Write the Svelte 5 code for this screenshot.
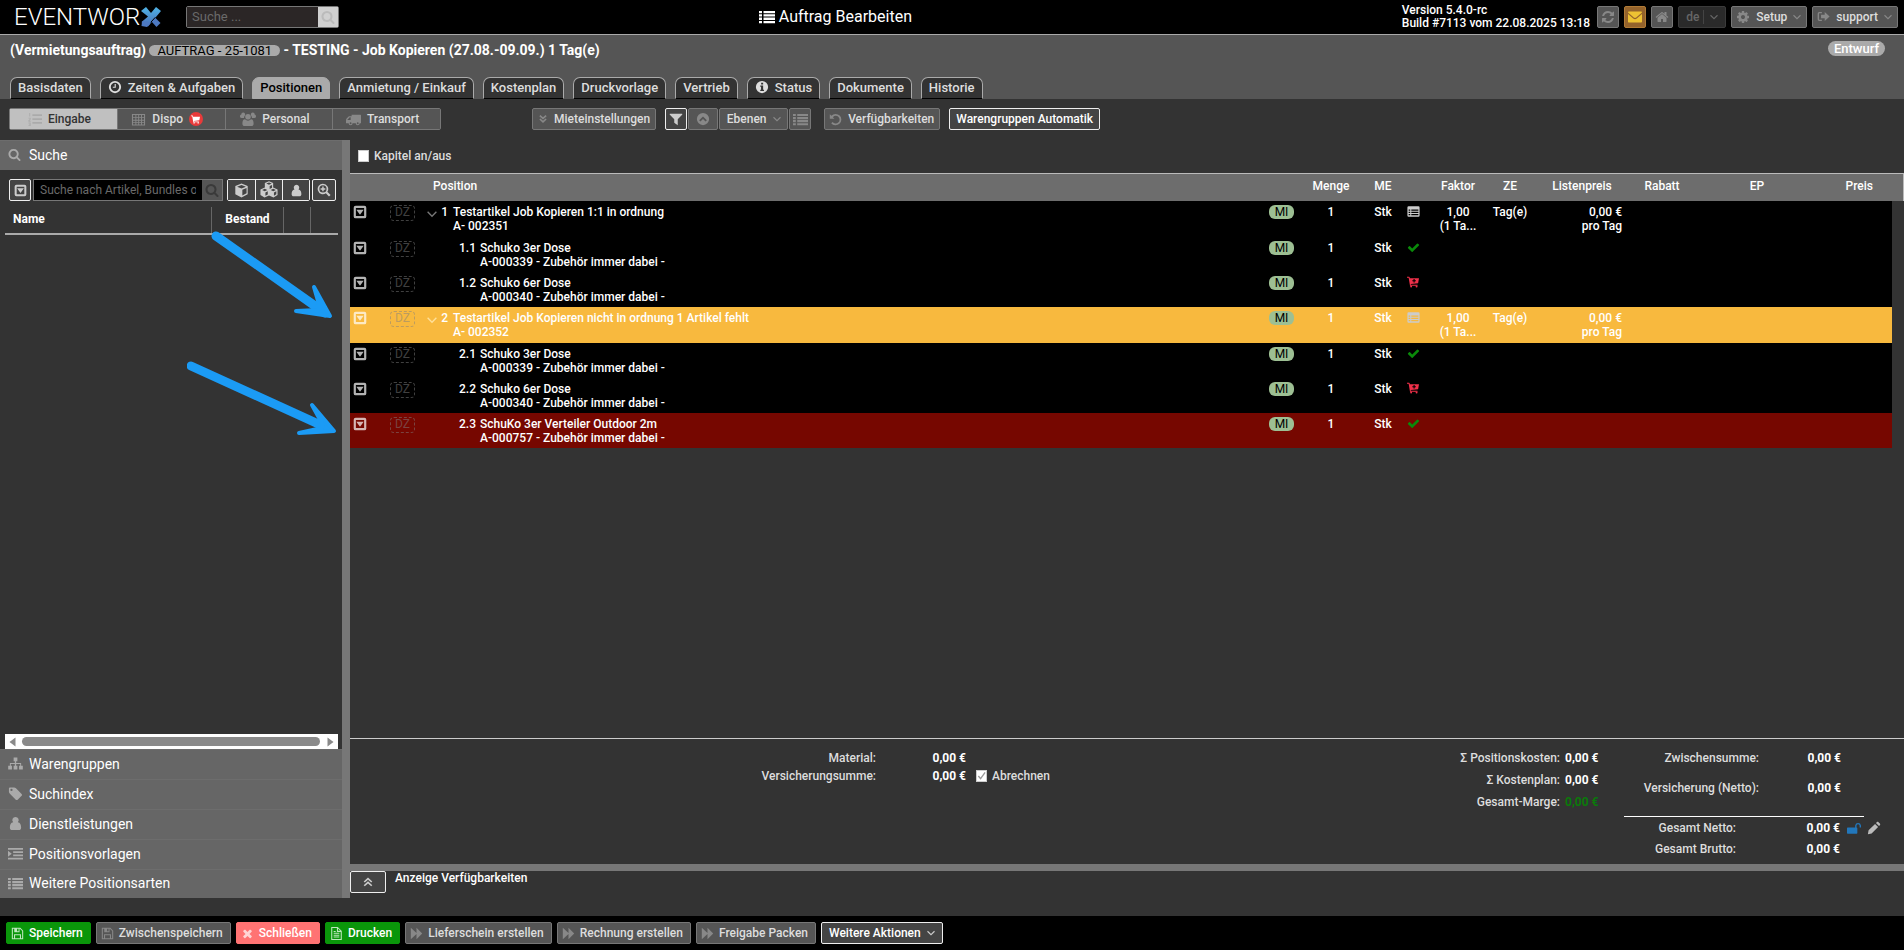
<script lang="ts">
  type Glyph = { vb?: string; d: string; stroke?: number };

  const glyphs: Record<string, Glyph> = {
    home: { vb: '0 0 1792 1792', d: 'M1472 992v480q0 26-19 45t-45 19h-384v-384h-256v384h-384q-26 0-45-19t-19-45v-480q0-1 .5-3t.5-3l575-474 575 474q1 2 1 6zm223-69l-62 74q-8 9-21 11h-3q-13 0-21-7l-692-577-692 577q-12 8-24 7-13-2-21-11l-62-74q-8-10-7-23.500t11-21.500l719-599q32-26 76-26t76 26l244 204v-195q0-14 9-23t23-9h192q14 0 23 9t9 23v408l219 182q10 8 11 21.500t-7 23.500z' },
    check: { vb: '0 0 1792 1792', d: 'M1671 566q0 40-28 68l-724 724-136 136q-28 28-68 28t-68-28l-136-136-362-362q-28-28-28-68t28-68l136-136q28-28 68-28t68 28l294 295 656-657q28-28 68-28t68 28l136 136q28 28 28 68z' },
    times: { vb: '0 0 1792 1792', d: 'M1490 1322q0 40-28 68l-136 136q-28 28-68 28t-68-28l-294-294-294 294q-28 28-68 28t-68-28l-136-136q-28-28-28-68t28-68l294-294-294-294q-28-28-28-68t28-68l136-136q28-28 68-28t68 28l294 294 294-294q28-28 68-28t68 28l136 136q28 28 28 68t-28 68l-294 294 294 294q28 28 28 68z' },
    search: { vb: '0 0 1792 1792', d: 'M1216 832q0-185-131.500-316.500t-316.500-131.500-316.500 131.500-131.500 316.500 131.500 316.500 316.500 131.500 316.500-131.500 131.500-316.500zm512 832q0 52-38 90t-90 38q-54 0-90-38l-343-342q-179 124-399 124-143 0-273.500-55.500t-225-150-150-225-55.500-273.500 55.500-273.500 150-225 225-150 273.500-55.500 273.500 55.500 225 150 150 225 55.500 273.500q0 220-124 399l343 343q37 37 37 90z' },
    cog: { vb: '0 0 1792 1792', d: 'M1152 896q0-106-75-181t-181-75-181 75-75 181 75 181 181 75 181-75 75-181zm512-109v222q0 12-8 23t-20 13l-185 28q-19 54-39 91 35 50 107 138 10 12 10 25t-9 23q-27 37-99 108t-94 71q-12 0-26-9l-138-108q-44 23-91 38-16 136-29 186-7 28-36 28h-222q-14 0-24.500-8.500t-11.500-21.500l-28-184q-49-16-90-37l-141 107q-10 9-25 9-14 0-25-11-126-114-165-168-7-10-7-23 0-12 8-23 15-21 51-66.500t54-70.500q-27-50-41-99l-183-27q-13-2-21-12.500t-8-23.500v-222q0-12 8-23t19-13l186-28q14-46 39-92-40-57-107-138-10-12-10-24 0-10 9-23 26-36 98.500-107.500t94.500-71.500q13 0 26 10l138 107q44-23 91-38 16-136 29-186 7-28 36-28h222q14 0 24.500 8.500t11.500 21.500l28 184q49 16 90 37l142-107q9-9 24-9 13 0 25 10 129 119 165 170 7 8 7 22 0 12-8 23-15 21-51 66.500t-54 70.500q26 50 41 98l183 28q13 2 21 12.500t8 23.500z' },
    refresh: { vb: '0 0 1792 1792', d: 'M1639 1056q0 5-1 7-64 268-268 434.500t-478 166.500q-146 0-282.500-55t-243.500-157l-129 129q-19 19-45 19t-45-19-19-45v-448q0-26 19-45t45-19h448q26 0 45 19t19 45-19 45l-137 137q71 66 161 102t187 36q134 0 250-65t186-179q11-17 53-117 8-23 30-23h192q13 0 22.500 9.500t9.500 22.500zm25-800v448q0 26-19 45t-45 19h-448q-26 0-45-19t-19-45 19-45l138-138q-148-137-349-137-134 0-250 65t-186 179q-11 17-53 117-8 23-30 23h-199q-13 0-22.500-9.500t-9.500-22.500v-7q65-268 270-434.500t480-166.500q146 0 284 55.500t245 156.500l130-129q19-19 45-19t45 19 19 45z' },
    mail: { d: 'M1 3.500C1 3 1.400 2.500 2 2.500H14c.6 0 1 .5 1 1L9.200 8.600Q8 9.500 6.800 8.600L1 3.500zM1 5l5.200 4.600Q8 10.900 9.800 9.600L15 5v7.500c0 .6-.4 1-1 1H2c-.6 0-1-.4-1-1z' },
    list: { d: 'M0 2h3v2.300H0zM4.500 2H16v2.300H4.500zM0 5.300h3v2.300H0zM4.500 5.300H16v2.300H4.500zM0 8.600h3v2.300H0zM4.500 8.600H16v2.300H4.500zM0 11.900h3v2.300H0zM4.500 11.900H16v2.300H4.500z' },
    numbers: { d: 'M5 2.500h11v2H5zM5 7h11v2H5zM5 11.500h11v2H5zM1.500 1h1v4h-1zM.5 6.500h2.500v2l-1.500 1.500H3v1H.5V9.500L2 8.200V7.500H.5zM.5 12H3v4H.5v-1H2v-.6H1v-.8h1V13H.5z' },
    grid: { d: 'M1 2h14v12.500H1zM2.200 3.200v2h2.500v-2zM5.700 3.200v2h2v-2zM8.700 3.200v2h2v-2zM11.700 3.200v2h2.200v-2zM2.200 6.200v2h2.500v-2zM5.700 6.200v2h2v-2zM8.700 6.200v2h2v-2zM11.700 6.200v2h2.200v-2zM2.200 9.200v1.600h2.500V9.200zM5.700 9.200v1.600h2V9.200zM8.700 9.200v1.600h2V9.200zM11.700 9.200v1.600h2.200V9.200zM2.200 11.800v1.500h2.500v-1.500zM5.700 11.800v1.500h2v-1.500zM8.700 11.800v1.500h2v-1.500zM11.700 11.800v1.500h2.200v-1.500z' },
    users: { d: 'M3.200 1.500a2 2 0 0 1 1.700 3A3.800 3.800 0 0 0 4 7H1.500C.5 7 0 6.500 0 5.800 0 4.500.5 3.600 1.300 3.600A2 2 0 0 1 3.200 1.500zM12.800 1.500a2 2 0 0 0-1.700 3A3.800 3.800 0 0 1 12 7h2.500c1 0 1.500-.5 1.500-1.200 0-1.300-.5-2.200-1.300-2.200A2 2 0 0 0 12.800 1.500zM8 3a2.800 2.800 0 1 1 0 5.600A2.800 2.800 0 0 1 8 3zM5 8.300Q8 11 11 8.300c2 0 2.600 2 2.600 4.400 0 1.500-.9 2.300-2.300 2.300H4.700c-1.400 0-2.300-.8-2.300-2.300C2.400 10.300 3 8.300 5 8.300z' },
    truck: { d: 'M6 3h9.500c.3 0 .5.2.5.5V12h-1.400a2.100 2.100 0 0 1-4.200 0H7a2.100 2.100 0 0 1-4.200 0H0V9c0-1 .2-1.800.9-2.400L2.800 4.900c.4-.4.7-.5 1.200-.5h2zM1.500 8.500H5V5.700H4L1.500 8.200zM4.900 11a1 1 0 1 0 0 2 1 1 0 0 0 0-2zM12.500 11a1 1 0 1 0 0 2 1 1 0 0 0 0-2z' },
    cart: { d: 'M0 1h2.800c.4 0 .6.3.7.8L3.700 3H16l-1.200 6.500L5 10.600l.1.900H14v1.500H4L2.200 2.300H0zM4.200 14a1.300 1.300 0 1 1 2.600 0 1.300 1.300 0 0 1-2.600 0zM11.500 14a1.300 1.300 0 1 1 2.600 0 1.300 1.300 0 0 1-2.600 0z' },
    cartplus: { d: 'M0 1h2.800c.4 0 .6.3.7.8L3.700 3H16l-1.200 6.500L5 10.600l.1.900H14v1.500H4L2.200 2.300H0zM8.700 4v1.600H7.100v1.400h1.600v1.600h1.500V7h1.600V5.600h-1.600V4zM4.200 14a1.300 1.300 0 1 1 2.600 0 1.300 1.300 0 0 1-2.600 0zM11.500 14a1.300 1.300 0 1 1 2.600 0 1.300 1.300 0 0 1-2.600 0z' },
    clock: { d: 'M8 1a7 7 0 1 1 0 14A7 7 0 0 1 8 1zm0 2.200a4.800 4.800 0 1 0 0 9.600 4.800 4.800 0 0 0 0-9.600zM7.600 4.500h1.300v4.300H5.500V7.600h2.100z' },
    info: { d: 'M8 1a7 7 0 1 1 0 14A7 7 0 0 1 8 1zM7 3.200v2h2.300v-2zM6 6.300v1.300h.9v3.600H6v1.300h4.300v-1.300h-1V6.300z' },
    chevdown: { d: 'M1 4.500l7 7 7-7', stroke: 2.2 },
    dbldown: { d: 'M3 2.500L8 7l5-4.500M3 8L8 12.500 13 8', stroke: 2.600 },
    dblup: { d: 'M3 8l5-4.500L13 8M3 13l5-4.500 5 4.500', stroke: 2.2 },
    filter: { d: 'M1 2h14c.4.500.3.800 0 1.100L10 8.300V15L6 12.300v-4L1 3.100C.7 2.800.6 2.500 1 2z' },
    circleup: { d: 'M8 1a7 7 0 1 1 0 14A7 7 0 0 1 8 1zM8 5L3.600 9.300l1.500 1.500L8 8l2.900 2.800 1.500-1.500z' },
    undo: { d: 'M1 1.500L3 3.400A7 7 0 1 1 2.700 12.500l1.800-1.500A4.700 4.700 0 1 0 4.800 5.100L6.700 7H1z' },
    caretbox: { d: 'M3 .8h10A2.200 2.200 0 0 1 15.200 3v10a2.200 2.200 0 0 1-2.200 2.200H3A2.200 2.200 0 0 1 .8 13V3A2.200 2.200 0 0 1 3 .8zM3.300 3.300v9.400h9.400V3.300zM3.800 5.300h8.400L8 11.200z' },
    cube: { d: 'M8 .6l6.600 2.700v8.600L8 15.400 1.400 11.900V3.300zM8 2L3.300 4 8 5.900 12.700 4zM8.900 7.200v6.100l4.500-2.400V5.300z' },
    cubes: { d: 'M8 .3l3.700 1.500v4L15.600 7.500v5L12 14.700 8 12.900l-4 1.800L.4 12.500v-5l3.900-1.700v-4zM8 1.300L5.600 2.300 8 3.400l2.400-1.100zM8.600 4.500v2.700l2.100-1.100V3.500zM4.200 6.900L1.900 7.900l2.300 1.100 2.300-1.100zM4.800 10.200v2.800l2.100-1V9.200zM11.800 6.900L9.500 7.900l2.300 1.100 2.300-1.100zM12.400 10.200v2.800l2.100-1.200V9.200z' },
    person: { d: 'M8 1a3.400 3.400 0 0 1 2.500 5.700C13 7 14 9.500 14 12.500c0 1.600-1 2.500-2.500 2.500h-7C3 15 2 14.100 2 12.500 2 9.500 3 7 5.500 6.700A3.400 3.400 0 0 1 8 1z' },
    zoomin: { d: 'M6.800.8a6 6 0 0 1 5 9.300l3.700 3.600-1.800 1.800-3.600-3.700A6 6 0 1 1 6.800.8zm0 1.900a4.100 4.100 0 1 0 0 8.200 4.100 4.100 0 0 0 0-8.200zM6 4.100h1.600V6h1.900v1.600H7.600v1.900H6V7.600H4.100V6H6z' },
    sitemap: { d: 'M6 1.500h4v4H8.700V7.500H14v3h1.800v4h-4v-4H13V8.600H8.700v1.900H10v4H6v-4h1.300V8.600H3v1.900h1.200v4h-4v-4H2v-3h5.300v-2H6z' },
    tag: { d: 'M2 1.500h4.500c.7 0 1.500.4 2 .9l6 6c.6.600.6 1.400 0 2l-4.200 4.200c-.6.600-1.400.6-2 0l-6-6A3 3 0 0 1 1 6.500V2.500c0-.6.4-1 1-1zM3.700 3a1.200 1.200 0 1 0 0 2.400A1.200 1.200 0 0 0 3.700 3z' },
    indent: { d: 'M0 2h16v2H0zM5.500 5.500H16v2H5.500zM5.500 9H16v2H5.500zM0 12.500h16v2H0zM0 5l4 3.200L0 11.500z' },
    tablelist: { d: 'M2 1.500h12a1.500 1.500 0 0 1 1.500 1.500v10a1.500 1.500 0 0 1-1.500 1.500H2A1.500 1.500 0 0 1 .5 13V3A1.500 1.500 0 0 1 2 1.500zM2 5.500v1.600h2V5.500zM5.300 5.500v1.600H14V5.500zM2 8.300v1.500h2V8.300zM5.300 8.300v1.500H14V8.300zM2 11v1.600h2V11zM5.300 11v1.600H14V11z' },
    save: { d: 'M1 1h10.500L15 4.500V15H1zM2.300 2.300v11.400h1.400V9h8.600v4.700h1.400V5L11 2.300h-.5V6.600H4V2.300zM7.500 2.300v3h1.800v-3zM5 10.200v3.500h6v-3.500z' },
    doc: { d: 'M1.500 0h8L14.500 5v11h-13zM2.800 1.300v13.400h10.400V6H8.500V1.300zM9.800 1.800v2.900h2.900zM4.500 7.200h7v1.200h-7zM4.500 9.500h7v1.200h-7zM4.500 11.800h7V13h-7zM4.500 4.900H7v1.200H4.500z' },
    ffwd: { d: 'M1 1l7 6.500V1l7 7-7 7V8.500L1 15z' },
    signout: { d: 'M2.800 2.500H6V4H3c-.3 0-.6.300-.6.600v6.800c0 .3.3.6.6.6h3v1.500H2.800A2 2 0 0 1 .8 11.500v-7a2 2 0 0 1 2-2zM9.500 2.500L15.500 8l-6 5.500v-3.200h-4.500V5.700h4.500z' },
    unlock: { d: 'M9.300 7.500V5.200a3.400 3.400 0 0 1 6.700 0V7.500h-1.600V5.200a1.800 1.800 0 0 0-3.500 0v2.300c.6 0 .9.300.9.800v5.400c0 .5-.3.800-.8.800H.8c-.5 0-.8-.3-.8-.8V8.300c0-.5.3-.8.8-.8z' },
    pencil: { d: 'M1 15l.8-4.300 7.400-7.400 3.500 3.500-7.400 7.400zM10.200 2.300l1-1c.6-.6 1.400-.6 2 0l1.500 1.500c.6.600.6 1.400 0 2l-1 1z' }
  };

  const tabs = [
    { label: 'Basisdaten' },
    { label: 'Zeiten & Aufgaben', icon: 'clock' },
    { label: 'Positionen', active: true },
    { label: 'Anmietung / Einkauf' },
    { label: 'Kostenplan' },
    { label: 'Druckvorlage' },
    { label: 'Vertrieb' },
    { label: 'Status', icon: 'info' },
    { label: 'Dokumente' },
    { label: 'Historie' }
  ];

  const rows = [
    { nr: '1', name: 'Testartikel Job Kopieren 1:1 in ordnung', sub: 'A- 002351', icon: 'tablelist', parent: true, tone: '' },
    { nr: '1.1', name: 'Schuko 3er Dose', sub: 'A-000339 - Zubehör immer dabei -', icon: 'check', parent: false, tone: '' },
    { nr: '1.2', name: 'Schuko 6er Dose', sub: 'A-000340 - Zubehör immer dabei -', icon: 'cartplus', parent: false, tone: '' },
    { nr: '2', name: 'Testartikel Job Kopieren nicht in ordnung 1 Artikel fehlt', sub: 'A- 002352', icon: 'tablelist', parent: true, tone: 'warn' },
    { nr: '2.1', name: 'Schuko 3er Dose', sub: 'A-000339 - Zubehör immer dabei -', icon: 'check', parent: false, tone: '' },
    { nr: '2.2', name: 'Schuko 6er Dose', sub: 'A-000340 - Zubehör immer dabei -', icon: 'cartplus', parent: false, tone: '' },
    { nr: '2.3', name: 'SchuKo 3er Verteiler Outdoor 2m', sub: 'A-000757 - Zubehör immer dabei -', icon: 'check', parent: false, tone: 'error' }
  ];

  const sections = [
    { label: 'Warengruppen', icon: 'sitemap' },
    { label: 'Suchindex', icon: 'tag' },
    { label: 'Dienstleistungen', icon: 'person' },
    { label: 'Positionsvorlagen', icon: 'indent' },
    { label: 'Weitere Positionsarten', icon: 'list' }
  ];
</script>

{#snippet icon(name: string, size: number)}
  {@const g = glyphs[name]}
  <svg class="ico {name}" width={size} height={size} viewBox={g.vb ?? '0 0 16 16'} aria-hidden="true">
    {#if g.stroke}
      <path d={g.d} fill="none" stroke="currentColor" stroke-width={g.stroke} />
    {:else}
      <path d={g.d} fill="currentColor" fill-rule="evenodd" />
    {/if}
  </svg>
{/snippet}

<div class="app">
  <header class="top">
    <a class="logo" href="#start" aria-label="EVENTWORX">
      <span>EVENTWOR</span>
      <svg width="20" height="20" viewBox="0 0 20 20" aria-hidden="true">
        <defs>
          <linearGradient id="lx" x1="0" y1="0" x2="0" y2="1">
            <stop offset="0" stop-color="#4fb4e6" />
            <stop offset="1" stop-color="#4a6db8" />
          </linearGradient>
        </defs>
        <path d="M5 0l5 6 5-6 5 4-13 15.500L.5 15 7 9.500 0 4z" fill="url(#lx)" />
        <path d="M1 14.500h5.500L9 17l-3 3-5.500-1z" fill="#4d79c2" />
        <path d="M10.500 14.500l3.500-4 5.500 5.500-4 4z" fill="#4d79c2" />
        <path d="M14.300 10.300l-4.500 5" stroke="#000" stroke-width="1" />
      </svg>
    </a>
    <form class="topsearch" onsubmit={(e) => e.preventDefault()}>
      <input type="search" placeholder="Suche ..." aria-label="Suche" />
      <button type="submit" aria-label="Suchen">{@render icon('search', 14)}</button>
    </form>
    <h1>{@render icon('list', 16)}Auftrag Bearbeiten</h1>
    <div class="version">Version 5.4.0-rc<br />Build #7113 vom 22.08.2025 13:18</div>
    <div class="topbtns">
      <button class="btn sq" aria-label="Aktualisieren">{@render icon('refresh', 14)}</button>
      <button class="btn sq mailbtn" aria-label="Nachrichten">{@render icon('mail', 16)}</button>
      <button class="btn sq" aria-label="Startseite">{@render icon('home', 14)}</button>
      <span class="lang">
        <select aria-label="Sprache"><option>de</option></select>
        {@render icon('chevdown', 8)}
      </span>
      <button class="btn setup">{@render icon('cog', 14)}<span>Setup</span>{@render icon('chevdown', 8)}</button>
      <button class="btn setup">{@render icon('signout', 13)}<span>support</span>{@render icon('chevdown', 8)}</button>
    </div>
  </header>

  <section class="sub">
    <div class="jobline">
      <h2>(Vermietungsauftrag) <span class="jobnr">AUFTRAG - 25-1081</span> - TESTING - Job Kopieren (27.08.-09.09.) 1 Tag(e)</h2>
      <span class="state">Entwurf</span>
    </div>
    <nav class="tabs">
      {#each tabs as tab}
        <a href="#tab" class:active={tab.active}>
          {#if tab.icon}{@render icon(tab.icon, 14)}{/if}{tab.label}
        </a>
      {/each}
    </nav>
  </section>

  <div class="toolbar">
    <div class="seg">
      <button class="on">{@render icon('numbers', 14)}Eingabe</button>
      <button>{@render icon('grid', 15)}Dispo<i class="cartdot">{@render icon('cart', 9)}</i></button>
      <button>{@render icon('users', 16)}Personal</button>
      <button>{@render icon('truck', 15)}Transport</button>
    </div>
    <button class="btn rent">{@render icon('dbldown', 10)}Mieteinstellungen</button>
    <div class="tools">
      <button class="btn sq lit" aria-label="Filter">{@render icon('filter', 14)}</button>
      <button class="btn upbtn" aria-label="Nach oben">{@render icon('circleup', 14)}</button>
      <button class="btn levels">Ebenen{@render icon('chevdown', 8)}</button>
      <button class="btn sq" aria-label="Liste">{@render icon('list', 15)}</button>
    </div>
    <button class="btn avail">{@render icon('undo', 13)}Verfügbarkeiten</button>
    <button class="btn lit auto">Warengruppen Automatik</button>
  </div>

  <main>
    <aside>
      <button class="acc first">{@render icon('search', 13)}Suche</button>
      <div class="find">
        <button class="btn sq lit" aria-label="Auswahl">{@render icon('caretbox', 13)}</button>
        <form class="artsearch" onsubmit={(e) => e.preventDefault()}>
          <input placeholder="Suche nach Artikel, Bundles oder Personal" aria-label="Artikelsuche" />
          <button type="submit" aria-label="Suchen">{@render icon('search', 14)}</button>
        </form>
        <div class="group">
          <button aria-label="Artikel">{@render icon('cube', 15)}</button>
          <button aria-label="Bundles">{@render icon('cubes', 18)}</button>
          <button aria-label="Personal">{@render icon('person', 13)}</button>
        </div>
        <button class="btn sq lit zoom" aria-label="Erweiterte Suche">{@render icon('zoomin', 14)}</button>
      </div>
      <table class="stock">
        <colgroup><col /><col class="s1" /><col class="s2" /><col class="s3" /></colgroup>
        <thead><tr><th>Name</th><th>Bestand</th><th></th><th></th></tr></thead>
      </table>
      <div class="void"></div>
      <div class="hscroll">
        <svg width="7" height="10" viewBox="0 0 7 10" aria-hidden="true"><path d="M6.500.5v9L.5 5z" fill="#8a8a8a" /></svg>
        <span></span>
        <svg width="7" height="10" viewBox="0 0 7 10" aria-hidden="true"><path d="M.5.5v9l6-4.500z" fill="#8a8a8a" /></svg>
      </div>
      <div class="accs">
        {#each sections as s}
          <button class="acc">{@render icon(s.icon, 15)}{s.label}</button>
        {/each}
      </div>
    </aside>
    <div class="split"></div>

    <section class="right">
      <label class="chapter"><input type="checkbox" />Kapitel an/aus</label>
      <table class="pos">
        <colgroup>
          <col class="w40" /><col class="w35" /><col /><col class="w38" /><col class="w58" /><col class="w46" /><col class="w24" />
          <col class="w56" /><col class="w48" /><col class="w96" /><col class="w64" /><col class="w126" /><col class="w72" /><col class="w12" />
        </colgroup>
        <thead>
          <tr>
            <th></th><th></th><th class="l">Position</th><th></th><th>Menge</th><th>ME</th><th></th>
            <th>Faktor</th><th>ZE</th><th>Listenpreis</th><th>Rabatt</th><th>EP</th><th class="pr">Preis</th><th></th>
          </tr>
        </thead>
        <tbody>
          {#each rows as r}
            <tr class={r.tone} class:parent={r.parent}>
              <td class="menu"><button aria-label="Positionsmenü">{@render icon('caretbox', 14)}</button></td>
              <td><span class="dz">DZ</span></td>
              <td class="l">
                <div class="name">
                  <span class="chev">{#if r.parent}{@render icon('chevdown', 10)}{/if}</span>
                  <span class="nr">{r.nr}</span>
                  <span>{r.name}<br />{r.sub}</span>
                </div>
              </td>
              <td class="micell"><span class="mi">MI</span></td>
              <td>1</td>
              <td>Stk</td>
              <td class="stat">{@render icon(r.icon, r.icon === 'cartplus' ? 12 : 13)}</td>
              <td>{#if r.parent}1,00<br />(1 Ta...{/if}</td>
              <td>{#if r.parent}Tag(e){/if}</td>
              <td class="price">{#if r.parent}0,00 €<br />pro Tag{/if}</td>
              <td></td><td></td><td></td><td class="gut"></td>
            </tr>
          {/each}
        </tbody>
      </table>
      <div class="void"></div>

      <div class="sums">
        <div class="suma">
          <span>Material:</span><b>0,00 €</b><i></i>
          <span>Versicherungsumme:</span><b>0,00 €</b>
          <label><input type="checkbox" checked />Abrechnen</label>
        </div>
        <div class="sumb">
          <span>Σ Positionskosten:</span><b>0,00 €</b>
          <span>Σ Kostenplan:</span><b>0,00 €</b>
          <span>Gesamt-Marge:</span><b class="green">0,00 €</b>
        </div>
        <div class="sumc">
          <div class="net"><span>Zwischensumme:</span><b>0,00 €</b></div>
          <div class="net"><span>Versicherung (Netto):</span><b>0,00 €</b></div>
          <div class="rule"></div>
          <div class="tot"><span>Gesamt Netto:</span><b>0,00 €</b>
            <button class="lock" aria-label="Entsperren">{@render icon('unlock', 14)}</button>
            <button aria-label="Bearbeiten">{@render icon('pencil', 14)}</button>
          </div>
          <div class="tot"><span>Gesamt Brutto:</span><b>0,00 €</b></div>
        </div>
      </div>
      <div class="hsplit"></div>
      <div class="availbar">
        <button class="btn lit" aria-label="Aufklappen">{@render icon('dblup', 12)}</button>
        <span>Anzeige Verfügbarkeiten</span>
      </div>
    </section>

    <svg class="marks" width="150" height="210" viewBox="0 0 150 210" aria-hidden="true">
      <g fill="none" stroke="#1b9bf5" stroke-linecap="round" stroke-linejoin="round">
        <path d="M29 6L138 83" stroke-width="9" />
        <path d="M4 136L138 197" stroke-width="9" />
      </g>
      <g fill="#1b9bf5" stroke="#1b9bf5" stroke-width="4" stroke-linejoin="round">
        <path d="M127 57L143 86 109 81 131 80 133 78z" />
        <path d="M125 175L147 201 112 203 135 198 136 195z" />
      </g>
    </svg>
  </main>

  <footer>
    <button class="btn green">{@render icon('save', 13)}Speichern</button>
    <button class="btn">{@render icon('save', 13)}Zwischenspeichern</button>
    <button class="btn red">{@render icon('times', 13)}Schließen</button>
    <button class="btn green">{@render icon('doc', 13)}Drucken</button>
    <button class="btn">{@render icon('ffwd', 13)}Lieferschein erstellen</button>
    <button class="btn">{@render icon('ffwd', 13)}Rechnung erstellen</button>
    <button class="btn">{@render icon('ffwd', 13)}Freigabe Packen</button>
    <button class="btn lit more">Weitere Aktionen{@render icon('chevdown', 8)}</button>
  </footer>
</div>

<style>
  :global(body) { margin: 0; background: #333; }
  :global(*) { box-sizing: border-box; }
  .app {
    min-height: 100vh;
    display: flex;
    flex-direction: column;
    font-family: Roboto, "Liberation Sans", sans-serif;
    font-size: 12px;
    font-weight: 500;
    color: #fff;
    background: #333;
  }
  button, input, select { font: inherit; color: inherit; margin: 0; }
  button { padding: 0; cursor: pointer; }
  .ico { display: block; flex: none; }

  .btn {
    display: flex;
    align-items: center;
    justify-content: center;
    gap: 6px;
    height: 22px;
    padding: 0 6px;
    border: 1px solid #777;
    border-radius: 2px;
    background: #555;
    color: #ddd;
    white-space: nowrap;
  }
  .btn .ico { color: #888; }
  .sq { width: 22px; padding: 0; }
  .lit { border-color: #eee; color: #fff; background: #444; }
  .lit .ico { color: #ccc; }

  .top {
    display: flex;
    align-items: center;
    height: 35px;
    padding: 0 6px 1px 14px;
    background: #000;
    border-bottom: 1px solid #aaa;
  }
  .logo { display: flex; align-items: center; gap: 1px; width: 172px; color: #fff; text-decoration: none; }
  .logo span { font-size: 24px; font-weight: 300; line-height: 28px; }
  .topsearch { display: flex; width: 153px; height: 22px; border: 1px solid #777; border-radius: 2px; }
  .topsearch input { flex: 1; min-width: 0; padding: 0 5px; border: 0; background: #2b2626; font-size: 13px; font-weight: 400; outline: 0; }
  input::placeholder { color: #6a6a6a; opacity: 1; }
  .topsearch button { display: flex; align-items: center; justify-content: center; width: 20px; border: 0; background: #d0d0d0; color: #bbb; }
  h1 { flex: 1; display: flex; justify-content: center; align-items: center; gap: 4px; margin: 0; padding-right: 70px; font-size: 16px; font-weight: 400; }
  .version { line-height: 13px; margin-right: 7px; }
  .topbtns { display: flex; gap: 5px; }
  .mailbtn { background: #94632c; border-color: #b07a35; }
  .mailbtn .ico { color: #edc233; }
  .lang { display: flex; align-items: center; width: 48px; height: 22px; padding-right: 7px; border: 1px solid #3a3a3a; border-radius: 2px; background: #2a2a2a; color: #666; }
  .lang select { flex: 1; min-width: 0; height: 14px; margin-right: 6px; padding: 0 0 0 7px; border: 0; border-right: 1px solid #444; background: none; appearance: none; line-height: 14px; }
  .setup { padding: 0 5px 0 4px; }

  .sub { display: flex; flex-direction: column; justify-content: space-between; height: 64px; padding: 6px 9px 0 10px; background: #555; }
  .jobline { display: flex; justify-content: space-between; padding-right: 10px; }
  h2 { margin: 4px 0 0; line-height: 11px; font-size: 14px; font-weight: 700; }
  .jobnr { display: inline-block; padding: 0 8px; border-radius: 6px; background: #aaa; color: #000; font-size: 13px; font-weight: 400; line-height: 11px; }
  .state { height: 15px; padding: 0 6px; border-radius: 8px; background: #aaa; font-size: 13px; line-height: 15px; }
  .tabs { display: flex; gap: 9px; }
  .tabs a {
    display: flex; align-items: center; gap: 6px; height: 22px; padding: 0 7px 2px;
    border: 1px solid #aaa; border-bottom: 1px solid #000; border-radius: 7px 7px 0 0;
    background: #333; color: #ddd; font-size: 13px; text-decoration: none;
  }
  .tabs a.active { background: #aaa; color: #000; border-bottom-color: #aaa; }

  .toolbar { display: flex; align-items: flex-start; height: 41px; padding: 9px 9px 0; }
  .seg { display: flex; width: 432px; margin-right: 91px; border: 1px solid #777; border-radius: 2px; }
  .seg button { flex: 1; display: flex; align-items: center; justify-content: center; gap: 6px; height: 20px; padding-right: 8px; border: 0; border-left: 1px solid #777; background: #555; color: #ddd; }
  .seg button:first-child { border-left: 0; }
  .seg .ico { color: #888; }
  .seg .on { background: #c0c0c0; color: #333; }
  .seg .on .ico { color: #aaa; }
  .cartdot { display: flex; align-items: center; justify-content: center; width: 14px; height: 14px; border-radius: 7px; background: #e93a3a; }
  .seg .cartdot .ico { color: #fff; }
  .rent { padding: 0 5px; }
  .tools { display: flex; gap: 1px; margin: 0 13px 0 9px; }
  .tools .upbtn { width: 30px; }
  .tools .levels { width: 69px; }
  .avail { padding: 0 5px 0 4px; }
  .auto { margin-left: 9px; padding: 0 6px; }

  main { position: relative; flex: 1; display: flex; margin-bottom: 18px; }
  aside { display: flex; flex-direction: column; width: 342px; }
  .split { width: 8px; background: #777; }
  .acc { display: flex; align-items: center; gap: 6px; width: 100%; height: 30px; padding: 0 8px 2px; border: 0; border-top: 1px solid #6d6d6d; background: #666; font-size: 14px; font-weight: 400; }
  .acc .ico { color: #aaa; }
  .accs .acc:last-child { height: 29px; }
  .first { gap: 8px; }
  .find { display: flex; padding: 9px 6px 0 9px; }
  .artsearch { display: flex; flex: 1; min-width: 0; height: 22px; margin: 0 4px 0 2px; border: 1px solid #777; }
  .artsearch input { flex: 1; min-width: 0; padding: 0 6px; border: 0; background: #000; font-weight: 400; outline: 0; }
  .artsearch button { display: flex; align-items: center; justify-content: center; width: 20px; border: 0; background: #555; color: #3a3a3a; }
  .group { display: flex; height: 22px; border: 1px solid #eee; border-radius: 2px; }
  .group button { display: flex; align-items: center; justify-content: center; width: 27px; border: 0; background: #444; color: #ccc; }
  .group button + button { border-left: 1px solid #eee; }
  .zoom { width: 24px; margin-left: 2px; }
  .stock { width: auto; margin: 6px 4px 0 5px; border-collapse: separate; border-spacing: 0; border-bottom: 2px solid #aaa; table-layout: fixed; }
  .stock th { height: 26px; padding: 0 0 2px; border-right: 1px solid #666; font-weight: 700; }
  .stock th:first-child { padding-left: 8px; text-align: left; }
  .stock th:last-child { border: 0; }
  .s1 { width: 72px; }
  .s2 { width: 27px; }
  .s3 { width: 27px; }
  .void { flex: 1; }
  .hscroll { display: flex; align-items: center; gap: 6px; height: 15px; margin: 0 4px 0 5px; padding: 0 4px; background: #fff; }
  .hscroll span { flex: 1; height: 9px; margin-right: 1px; border-radius: 5px; background: #8a8a8a; }

  .right { flex: 1; min-width: 0; display: flex; flex-direction: column; }
  .chapter { display: flex; align-items: center; gap: 5px; height: 33px; padding: 0 0 2px 8px; color: #ddd; }
  input[type="checkbox"] { appearance: none; width: 11px; height: 12px; border: 1px solid #ccc; background: #fff; }
  input[type="checkbox"]:checked {
    background: #fff url("data:image/svg+xml,%3Csvg xmlns='http://www.w3.org/2000/svg' viewBox='0 0 10 10'%3E%3Cpath d='M1.500 5.500l2.500 3 5-7' fill='none' stroke='%23999' stroke-width='1.500'/%3E%3C/svg%3E");
  }
  .pos { width: 100%; border-collapse: separate; border-spacing: 0; table-layout: fixed; text-align: center; }
  .pos th { height: 28px; padding: 0 0 3px; border-top: 1px solid #bbb; background: #6d6d6d; font-weight: 500; }
  .pos th.l { padding-left: 8px; text-align: left; }
  .pos th:last-child { border-right: 1px solid #bbb; }
  .pos th.pr { text-align: right; padding-right: 19px; }
  .pos td { height: 35px; padding: 4px 0 0; background: #000; line-height: 14px; vertical-align: top; }
  .pos .parent td { height: 36px; }
  .pos .warn td { background: #f8b93e; }
  .pos .error td { background: #760700; }
  .pos .gut, .pos tr .gut { background: #333; }
  .menu button { display: block; margin-left: 3px; border: 0; background: none; color: rgba(255, 255, 255, 0.7); }
  .dz { display: block; width: 25px; height: 16px; border: 1px dashed rgba(128, 128, 128, 0.5); border-radius: 4px; color: rgba(128, 128, 128, 0.5); font-weight: 400; line-height: 13px; }
  .name { display: flex; text-align: left; white-space: nowrap; }
  .chev { width: 15px; padding: 4px 0 0 2px; color: #777; }
  .warn .chev { color: #ffe09a; }
  .nr { width: 8px; margin-right: 5px; text-align: right; }
  tr:not(.parent) .nr { width: 17px; margin: 0 4px 0 19px; text-align: left; }
  .micell { text-align: left; }
  .mi { display: block; width: 25px; height: 14px; margin-left: 5px; border-radius: 6px; background: #9dbf93; color: #000; font-weight: 400; text-align: center; }
  .stat .ico { margin-left: 1px; color: #ccc; }
  .stat .check { color: #0a8a0a; }
  .stat .cartplus { color: #f0304a; }
  .pos .price { padding-right: 8px; text-align: right; }
  .w12 { width: 12px; } .w24 { width: 24px; } .w35 { width: 35px; } .w38 { width: 38px; }
  .w40 { width: 40px; } .w46 { width: 46px; } .w48 { width: 48px; } .w56 { width: 56px; }
  .w58 { width: 58px; } .w64 { width: 64px; } .w72 { width: 72px; } .w96 { width: 96px; } .w126 { width: 126px; }

  .sums { display: flex; height: 126px; border-top: 1px solid #ccc; color: #ddd; }
  .sums b { font-weight: 700; color: #fff; }
  .suma { display: grid; grid-template-columns: 526px 90px auto; grid-auto-rows: 18px; align-items: center; align-content: start; padding-top: 10px; text-align: right; }
  .suma label { display: flex; align-items: center; gap: 5px; margin-left: 10px; }
  .sumb { display: grid; grid-template-columns: auto 32px; column-gap: 5px; grid-auto-rows: 22px; align-items: center; align-content: start; margin-left: auto; padding-top: 8px; text-align: right; white-space: nowrap; }
  .sumb .green { color: #0a7a0a; }
  .sumc { width: 280px; margin-left: 27px; padding-top: 4px; text-align: right; }
  .sumc div { display: flex; align-items: center; }
  .net { height: 30px; }
  .net span { width: 135px; }
  .net b { width: 82px; }
  .tot { height: 21px; }
  .tot span { width: 112px; }
  .tot b { width: 104px; }
  .tot button { margin-left: 6px; border: 0; background: none; color: #bbb; }
  .tot .lock { margin-left: 7px; color: #2277bb; }
  .rule { width: 240px; height: 1px; margin-top: 13px; background: #fff; }
  .hsplit { height: 7px; background: #777; }
  .availbar { display: flex; gap: 9px; height: 27px; }
  .availbar .btn { width: 36px; }
  .availbar span { line-height: 15px; }
  .marks { position: absolute; left: 187px; top: 90px; pointer-events: none; }

  footer { display: flex; align-items: center; gap: 5px; height: 34px; padding: 0 6px; background: #000; }
  footer .btn { gap: 5px; padding: 0 7px 0 4px; }
  footer .green { background: #0a960a; border-color: #0a960a; color: #fff; }
  footer .green .ico { color: #bfe8bf; }
  footer .red { background: #ff7373; border-color: #ff7373; color: #fff; }
  footer .red .ico { color: #ffd5d5; }
  footer .more { padding: 0 7px; gap: 6px; }
</style>
